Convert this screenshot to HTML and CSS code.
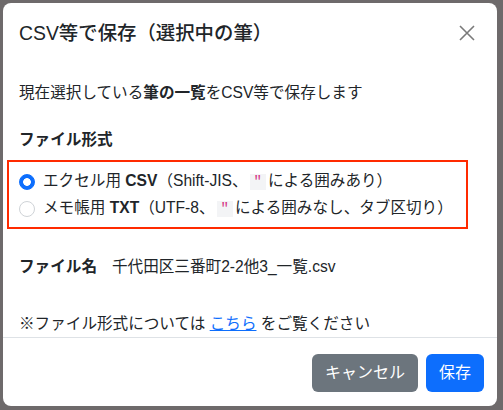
FILE: index.html
```html
<!DOCTYPE html>
<html lang="ja">
<head>
    <meta charset="UTF-8">
    <title>CSV等で保存</title>
    <link rel="stylesheet" href="styles.css">
</head>
<body>
<div class="modal">
    <div class="modal-header">
        <h5 class="modal-title">CSV等で保存（選択中の筆）</h5>
        <button type="button" class="btn-close" aria-label="閉じる">
            <svg width="16" height="16" viewBox="0 0 16 16">
                <path d="M1 1 L15 15 M15 1 L1 15" stroke="#7a7a7a" stroke-width="1.6" fill="none"/>
            </svg>
        </button>
    </div>
    <div class="modal-body">
        <p class="lead-text">現在選択している<b>筆の一覧</b>をCSV等で保存します</p>

        <div class="section-label">ファイル形式</div>
        <div class="format-box">
            <label class="form-check">
                <input type="radio" name="format" class="form-check-input" checked>
                <span>エクセル用 <b>CSV</b>（Shift-JIS、<code>"</code>による囲みあり）</span>
            </label>
            <label class="form-check">
                <input type="radio" name="format" class="form-check-input">
                <span>メモ帳用 <b>TXT</b>（UTF-8、<code>"</code>による囲みなし、タブ区切り）</span>
            </label>
        </div>

        <div class="file-row">
            <span class="file-label">ファイル名</span>
            <span>千代田区三番町2-2他3_一覧.csv</span>
        </div>

        <p class="note">※ファイル形式については <a href="#">こちら</a> をご覧ください</p>
    </div>
    <div class="modal-footer">
        <button type="button" class="btn btn-secondary">キャンセル</button>
        <button type="button" class="btn btn-primary">保存</button>
    </div>
</div>
</body>
</html>
```

FILE: styles.css
```css
html, body {
    margin: 0;
    height: 100%;
}

body {
    background-color: #6e6a6b;
    padding: 3px 0 0 3px;
    box-sizing: border-box;
    font-family: "Liberation Sans", "Noto Sans CJK JP", sans-serif;
    font-size: 15.6px;
    line-height: 24px;
    color: #212529;
}

.modal {
    width: 494px;
    height: 403px;
    background: #fff;
    border-radius: 8px;
    display: flex;
    flex-direction: column;
    overflow: hidden;
}

.modal-header {
    display: flex;
    align-items: center;
    justify-content: space-between;
    padding: 15px 16px 17px 16px;
}

.modal-title {
    margin: 0;
    font-size: 19.4px;
    font-weight: 500;
    line-height: 30px;
}

.btn-close {
    border: none;
    background: none;
    padding: 0;
    margin-right: 6px;
    width: 16px;
    height: 16px;
    display: flex;
    cursor: pointer;
}

.modal-body {
    flex: 1;
    padding: 16px 16px 0 16px;
}

.lead-text {
    margin: 0;
}

.section-label {
    margin-top: 23px;
    font-weight: 700;
}

.format-box {
    margin: 8px 0 0 -12px;
    width: 461px;
    box-sizing: border-box;
    border: 2px solid #ff2a00;
    padding: 7px 10px 6px 10px;
}

.form-check {
    display: flex;
    align-items: center;
    gap: 8px;
    white-space: nowrap;
    cursor: pointer;
}

.form-check + .form-check {
    margin-top: 2px;
}

.form-check-input {
    appearance: none;
    -webkit-appearance: none;
    margin: 0;
    width: 16px;
    height: 16px;
    border: 1px solid #cfd3d7;
    border-radius: 50%;
    background: #fff;
    flex: none;
}

.form-check-input:checked {
    border-color: #0d6efd;
    background: radial-gradient(circle, #fff 0 3.5px, #0d6efd 4.2px);
}

code {
    font-family: "Liberation Mono", monospace;
    font-size: 14px;
    color: #d63384;
    background: #f3f4f6;
    padding: 0 4px;
    margin: 0 2px;
}

.file-row {
    margin-top: 26px;
    display: flex;
    gap: 15px;
}

.file-label {
    font-weight: 700;
}

.note {
    margin: 33px 0 0 0;
}

.note a {
    color: #0d6efd;
}

.modal-footer {
    border-top: 1px solid #dee2e6;
    display: flex;
    justify-content: flex-end;
    gap: 8px;
    padding: 16px 13px 14px 0;
}

.btn {
    font-family: inherit;
    font-size: 16px;
    line-height: 24px;
    padding: 7px 13px;
    border: none;
    border-radius: 6px;
    color: #fff;
    cursor: pointer;
}

.btn-secondary {
    background-color: #6c757d;
}

.btn-primary {
    background-color: #0d6efd;
}
```
